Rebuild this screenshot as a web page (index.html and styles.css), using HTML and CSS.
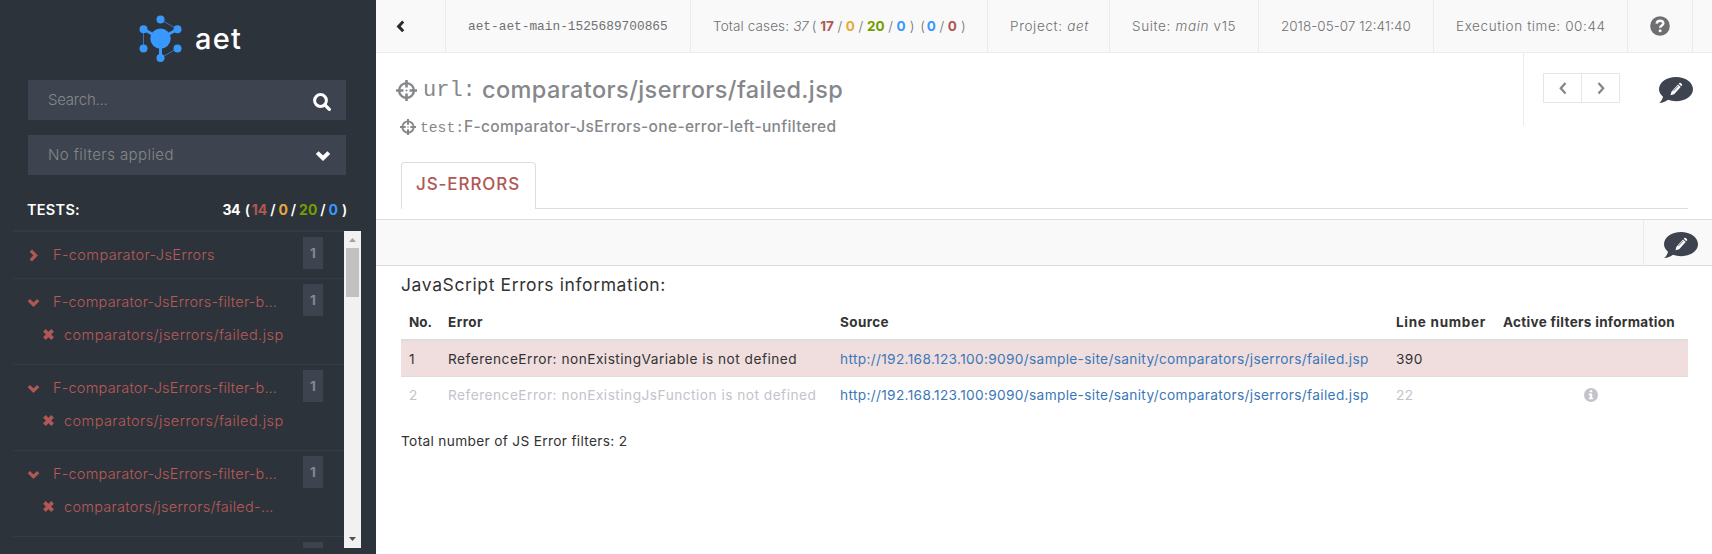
FILE: index.html
```html
<!DOCTYPE html>
<html lang="en">
<head>
<meta charset="utf-8">
<title>AET report</title>
<link rel="stylesheet" href="styles.css">
</head>
<body>
<svg class="defs" width="0" height="0" aria-hidden="true">
  <symbol id="chev-down" viewBox="0 0 16 11"><path d="M2.2 2.6 8 8.2l5.8-5.6" fill="none" stroke="currentColor" stroke-width="4"/></symbol>
  <symbol id="chev-right" viewBox="0 0 9 13"><path d="M1.8 1.6 6.6 6.4 1.8 11.3" fill="none" stroke="currentColor" stroke-width="3.3"/></symbol>
  <symbol id="cross" viewBox="0 0 11 11"><path d="M1.4 1.4l8.2 8.2M9.6 1.4 1.4 9.6" fill="none" stroke="currentColor" stroke-width="3.7"/></symbol>
  <symbol id="target" viewBox="0 0 21 21"><circle cx="10.5" cy="10.5" r="7.4" fill="none" stroke="currentColor" stroke-width="2.4"/><path d="M10.5 0v7.4M10.5 13.6V21M0 10.5h7.4M13.6 10.5H21" stroke="currentColor" stroke-width="2.6"/><circle cx="10.5" cy="10.5" r="1" fill="currentColor"/></symbol>
  <symbol id="note" viewBox="0 0 34 26"><path d="M17 0C26.4 0 34 5.400 34 12.200S26.400 24.200 17 24.200c-2.900 0-5.600-.5-8-1.400C6.600 24.700 3.600 26 .2 26c2-1.700 3.300-3.900 3.800-6.300C1.500 17.600 0 15 0 12.200 0 5.400 7.600 0 17 0z" fill="#3d444f"/><path d="M12.400 14.700l6.600-7.200 2.700 2.500-6.600 7.200-3.600 1zM19.700 6.800l.7-.7q.7-.5 1.300 0l1.300 1.200q.5.6 0 1.300l-.6.7z" fill="#fff"/><path d="M14.300 14.200l5-5.400" stroke="#3d444f" stroke-width=".7"/></symbol>
</svg>
<div class="app">
  <aside class="sidebar">
    <div class="brand">
      <svg class="logo" width="44" height="48" viewBox="0 0 44 48">
        <g stroke="#3998fd" fill="#3998fd">
          <path d="M22.500 5.500 39.500 15.300M5.500 15.300v19M39.500 34.300 22.500 44" stroke-width="1" opacity=".65"/>
          <path d="M5.500 15.300 22.500 24.600 39.500 15.300M22.500 24.600V44" fill="none" stroke-width="3"/>
          <g stroke="none"><circle cx="22.500" cy="24.600" r="10.200"/><circle cx="22.500" cy="5.500" r="4"/><circle cx="5.500" cy="15.300" r="4"/><circle cx="39.500" cy="15.300" r="4"/><circle cx="5.500" cy="34.500" r="4"/><circle cx="39.500" cy="34.500" r="4"/><circle cx="22.500" cy="44" r="4"/></g>
        </g>
      </svg>
      <span class="brand-name">aet</span>
    </div>
    <div class="field search"><span>Search...</span>
      <svg width="18" height="18" viewBox="0 0 18 18" fill="none" stroke="#fff"><circle cx="7.500" cy="7.500" r="5.900" stroke-width="3"/><path d="M12 12l4.300 4.300" stroke-width="3.300" stroke-linecap="round"/></svg>
    </div>
    <div class="field filter"><span>No filters applied</span><svg width="16" height="11"><use href="#chev-down"/></svg></div>
    <div class="tests"><span class="tests-label">TESTS:</span>
      <span class="tests-count"><b class="n34">34</b><i>(</i><b class="red">14</b><i>/</i><b class="yellow">0</b><i>/</i><b class="green">20</b><i>/</i><b class="blue">0</b><i class="last">)</i></span>
    </div>
    <div class="list">
      <ul class="tree">
        <li class="node closed"><div class="row"><svg class="chev-r" width="9" height="13"><use href="#chev-right"/></svg><span class="name full">F-comparator-JsErrors</span><em class="badge">1</em></div></li>
        <li class="node"><div class="row"><svg class="chev-d" width="13" height="9"><use href="#chev-down"/></svg><span class="name">F-comparator-JsErrors-filter-b…</span><em class="badge">1</em></div><div class="child"><svg width="11" height="11"><use href="#cross"/></svg><span class="leaf">comparators/jserrors/failed.jsp</span></div></li>
        <li class="node"><div class="row"><svg class="chev-d" width="13" height="9"><use href="#chev-down"/></svg><span class="name">F-comparator-JsErrors-filter-b…</span><em class="badge">1</em></div><div class="child"><svg width="11" height="11"><use href="#cross"/></svg><span class="leaf">comparators/jserrors/failed.jsp</span></div></li>
        <li class="node"><div class="row"><svg class="chev-d" width="13" height="9"><use href="#chev-down"/></svg><span class="name">F-comparator-JsErrors-filter-b…</span><em class="badge">1</em></div><div class="child"><svg width="11" height="11"><use href="#cross"/></svg><span class="leaf cut">comparators/jserrors/failed-…</span></div></li>
        <li class="node"><div class="row"><em class="badge"></em></div></li>
      </ul>
      <div class="scrollbar">
        <svg width="17" height="17"><path d="M5 11h7L8.500 7z" fill="#a3a3a3"/></svg>
        <div class="thumb"></div>
        <svg class="down" width="17" height="17"><path d="M5 6h7L8.500 10z" fill="#505050"/></svg>
      </div>
    </div>
  </aside>
  <main class="main">
    <header class="topbar">
      <div class="cell back"><svg width="9" height="13" viewBox="0 0 9 13"><path d="M7.200 1.500 2.600 6.400l4.600 4.900" fill="none" stroke="#2b2b2b" stroke-width="3"/></svg></div>
      <div class="cell build">aet-aet-main-1525689700865</div>
      <div class="cell cases"><span class="cases-label">Total cases:</span><i class="total">37</i><s>(</s><b class="red">17</b><s>/</s><b class="yellow">0</b><s>/</s><b class="green">20</b><s>/</s><b class="blue">0</b><s class="close">)</s><s class="open">(</s><b class="blue">0</b><s>/</s><b class="red">0</b><s class="close">)</s></div>
      <div class="cell project"><span>Project: <i>aet</i></span></div>
      <div class="cell suite"><span>Suite: <i>main</i> v15</span></div>
      <div class="cell date">2018-05-07 12:41:40</div>
      <div class="cell time">Execution time: 00:44</div>
      <div class="cell help"><svg width="20" height="20" viewBox="0 0 20 20"><circle cx="10" cy="10" r="9.800" fill="#6f6f72"/><path d="M6.700 7.600C6.900 5.500 8.300 4.700 10 4.700c1.900 0 3.300 1 3.300 2.600 0 2.300-3.100 2.200-3.100 4.500" fill="none" stroke="#f9f9f9" stroke-width="2.500"/><circle cx="10.100" cy="14.800" r="1.500" fill="#f9f9f9"/></svg></div>
    </header>
    <section class="title-area">
      <div class="titles">
        <h1 class="url"><svg width="21" height="21"><use href="#target"/></svg><code>url:</code><span>comparators/jserrors/failed.jsp</span></h1>
        <h2 class="test"><svg width="16" height="16"><use href="#target"/></svg><code>test:</code><span>F-comparator-JsErrors-one-error-left-unfiltered</span></h2>
      </div>
      <div class="actions">
        <div class="pager">
          <span><svg width="8" height="13" viewBox="0 0 8 13"><path d="M6.500 1 1.800 6.300l4.700 5.200" fill="none" stroke="#85878b" stroke-width="2.300"/></svg></span>
          <span><svg width="8" height="13" viewBox="0 0 8 13"><path d="M1.500 1l4.700 5.300-4.700 5.200" fill="none" stroke="#85878b" stroke-width="2.300"/></svg></span>
        </div>
        <svg class="note" width="34" height="26"><use href="#note"/></svg>
      </div>
    </section>
    <nav class="tabs"><div class="tab">JS-ERRORS</div></nav>
    <div class="toolbar"><div class="toolbar-note"><svg width="34" height="26"><use href="#note"/></svg></div></div>
    <section class="report">
      <h3>JavaScript Errors information:</h3>
      <div class="table">
        <div class="tr head"><div class="th-no">No.</div><div class="th-error">Error</div><div class="th-source">Source</div><div class="th-line">Line number</div><div class="th-filters">Active filters information</div></div>
        <div class="tr failed"><div>1</div><div class="msg">ReferenceError: nonExistingVariable is not defined</div><div><a>http://192.168.123.100:9090/sample-site/sanity/comparators/jserrors/failed.jsp</a></div><div class="num">390</div><div></div></div>
        <div class="tr filtered"><div>2</div><div class="msg">ReferenceError: nonExistingJsFunction is not defined</div><div><a>http://192.168.123.100:9090/sample-site/sanity/comparators/jserrors/failed.jsp</a></div><div class="num">22</div><div class="info"><svg width="14" height="14" viewBox="0 0 14 14"><circle cx="7" cy="7" r="7" fill="#c3c3cb"/><path d="M5.800 2.200h2.400v2H5.800zM4.800 5.500h3.400v4.300h1v1.500H4.800V9.800h1V7h-1z" fill="#fff"/></svg></div></div>
      </div>
      <p class="summary">Total number of JS Error filters: 2</p>
    </section>
  </main>
</div>
</body>
</html>
```
FILE: styles.css
```css
* { box-sizing: border-box; }
body { margin: 0; font-family: Inter, "Noto Sans", sans-serif; font-size: 13.7px; color: #333; background: #fff; overflow: hidden; }
h1, h2, h3, p, ul { margin: 0; padding: 0; font-weight: 400; }
ul { list-style: none; }
svg { display: block; flex: none; }
.defs { position: absolute; }
code { font-family: "Liberation Mono", monospace; }
.red { color: #b15754; }
.yellow { color: #eaa83c; }
.green { color: #739e00; }
.blue { color: #3998fd; }

.app { display: flex; width: 1712px; height: 554px; }

/* Sidebar */
.sidebar { width: 376px; height: 554px; background: #2d333b; color: #fff; flex: none; overflow: hidden; }
.brand { display: flex; height: 80px; padding: 14px 0 0 138px; }
.brand-name { margin-left: 13px; font-size: 29px; font-weight: 500; line-height: 49px; letter-spacing: 1.2px; }
.field { display: flex; align-items: center; justify-content: space-between; width: 318px; height: 40px; margin: 0 0 15px 28px; padding: 0 15px 0 20px; background: #3e444f; color: #85878a; font-size: 15px; font-weight: 300; }
.field span { padding-bottom: 2px; }
.search span { letter-spacing: -.24px; }
.search svg { margin-top: 4px; }
.filter span { letter-spacing: .42px; }
.filter svg { color: #fff; }
.tests { display: flex; justify-content: space-between; align-items: center; height: 40px; width: 319px; margin-left: 28px; padding-bottom: 1px; font-size: 14.5px; font-weight: 600; }
.tests-label { letter-spacing: .26px; margin-left: -1px; }
.tests-count { display: flex; font-size: 14px; }
.tests-count b { font-weight: 700; letter-spacing: .1px; }
.tests-count .n34 { letter-spacing: -.7px; margin-right: 4px; }
.tests-count i { font-style: normal; width: 9px; text-align: center; margin: 0 1px; }
.tests-count i:nth-of-type(1) { width: 5px; margin-right: 2px; }
.tests-count .last { width: 5px; margin: 0 0 0 4px; }
.list { display: flex; width: 348px; height: 318px; margin-left: 13px; overflow: hidden; }
.tree { width: 331px; border-top: 1px solid #343b47; color: #b95a57; font-size: 14.5px; font-weight: 300; }
.node { height: 86px; border-top: 1px solid #343b47; }
.node.closed { height: 47px; }
.row { display: flex; align-items: center; height: 46px; padding-left: 14px; }
.row svg, .child svg { margin-top: 0; color: #b15754; }
.row .chev-r { margin-left: 2px; }
.row .name { padding-bottom: 2px; }
.name { width: 223px; margin-left: 13px; letter-spacing: .22px; white-space: nowrap; }
.name.full { letter-spacing: .39px; margin-left: 15px; }
.badge { width: 20px; height: 32px; margin: -5px 21px 0 auto; background: #3e444f; color: #85898e; font-style: normal; font-size: 13.5px; font-weight: 700; line-height: 32px; text-align: center; }
.child { display: flex; align-items: center; height: 18px; padding-left: 30px; }
.leaf { margin-left: 10px; letter-spacing: .43px; white-space: nowrap; }
.leaf.cut { letter-spacing: .28px; }
.scrollbar { display: flex; flex-direction: column; width: 17px; height: 317px; margin-top: 1px; background: #f1f1f1; }
.thumb { width: 13px; height: 49px; margin-left: 2px; background: #c1c1c1; }
.scrollbar .down { margin-top: auto; }

/* Top bar */
.main { flex: 1; min-width: 0; }
.topbar { display: grid; grid-template-columns: 70px 245px 297px 122px 149px 175px 194px 65px; height: 53px; background: #f9f9f9; border-bottom: 1px solid #ebebeb; color: #707073; font-size: 13.5px; font-weight: 300; }
.cell { display: flex; align-items: center; border-right: 1px solid #ebebeb; padding-left: 22px; white-space: nowrap; }
.back { padding-left: 20px; }
.build { font-family: "Liberation Mono", monospace; font-size: 12.8px; font-weight: 400; padding-left: 22px; }
.cases-label { letter-spacing: .12px; }
.cases b { font-weight: 700; }
.cases s { width: 12px; text-align: center; text-decoration: none; }
.cases .close { width: 13px; }
.cases .open { width: 8px; }
.cases .total { margin-left: 4px; letter-spacing: -.4px; }
.project { letter-spacing: .66px; }
.suite { letter-spacing: .64px; }
.time { letter-spacing: .6px; }
.help { padding-left: 22px; }

/* Page title */
.title-area { display: flex; height: 109px; }
.titles { width: 1147px; padding-left: 20px; color: #85878b; }
.url { display: flex; align-items: center; height: 36px; margin-top: 19px; font-size: 23.5px; font-weight: 500; }
.url code { width: 59px; margin-left: 6px; font-size: 22px; font-weight: 400; }
.url span { margin-left: 0; padding-bottom: 2px; letter-spacing: .4px; }
.test { display: flex; align-items: center; height: 24px; margin-top: 7px; padding-left: 4px; font-size: 15.5px; font-weight: 500; }
.test code { width: 44px; margin-left: 4px; font-size: 14.67px; font-weight: 400; padding-top: 1px; }
.test span { padding-bottom: 2px; letter-spacing: .33px; }
.actions { display: flex; height: 73px; border-left: 1px solid #ebebeb; padding: 20px 0 0 19px; }
.pager { display: flex; height: 30px; border: 1px solid #e6e6e6; }
.pager span { display: flex; align-items: center; justify-content: center; width: 37px; }
.pager span + span { width: 38px; border-left: 1px solid #e6e6e6; }
.note { margin: 4px 0 0 39px; }
.tabs { height: 47px; margin: 0 24px 0 25px; border-bottom: 1px solid #ddd; }
.tab { width: 135px; height: 47px; border: 1px solid #ddd; border-bottom: 0; border-radius: 4px 4px 0 0; background: #fff; padding-left: 14px; line-height: 43px; color: #b15754; font-size: 17px; font-weight: 500; letter-spacing: .9px; }
.toolbar { display: flex; justify-content: flex-end; height: 47px; margin-top: 10px; border: solid #dcdce2; border-width: 1px 0; background: #f9f9f9; }
.toolbar-note { width: 69px; height: 46px; padding: 12px 0 0 20px; border-left: 1px solid #ebebeb; }

/* Error table */
.report { padding: 7px 24px 0 25px; }
.report h3 { height: 24px; line-height: 23px; font-size: 17.5px; letter-spacing: .61px; }
.table { margin-top: 7px; }
.tr { display: grid; grid-template-columns: 39px 392px 556px 107px 193px; height: 36px; align-items: center; white-space: nowrap; }
.tr > div { padding-left: 8px; }
.head { height: 37px; border-bottom: 2px solid #ddd; font-size: 13.5px; font-weight: 700; padding-bottom: 0; }
.failed { background: #f0dede; border-bottom: 1px solid #ddd; }
.filtered { color: #c3c3cb; }
.msg { letter-spacing: .48px; }
.num { letter-spacing: .4px; }
.th-error { letter-spacing: .45px; }
.th-source { letter-spacing: .39px; }
.th-line { letter-spacing: .72px; }
.th-filters { letter-spacing: .31px; }
.tr a { color: #3b77b7; letter-spacing: .33px; }
.info svg { margin-left: 81px; }
.summary { height: 20px; margin-top: 18px; line-height: 20px; letter-spacing: .33px; }
```
